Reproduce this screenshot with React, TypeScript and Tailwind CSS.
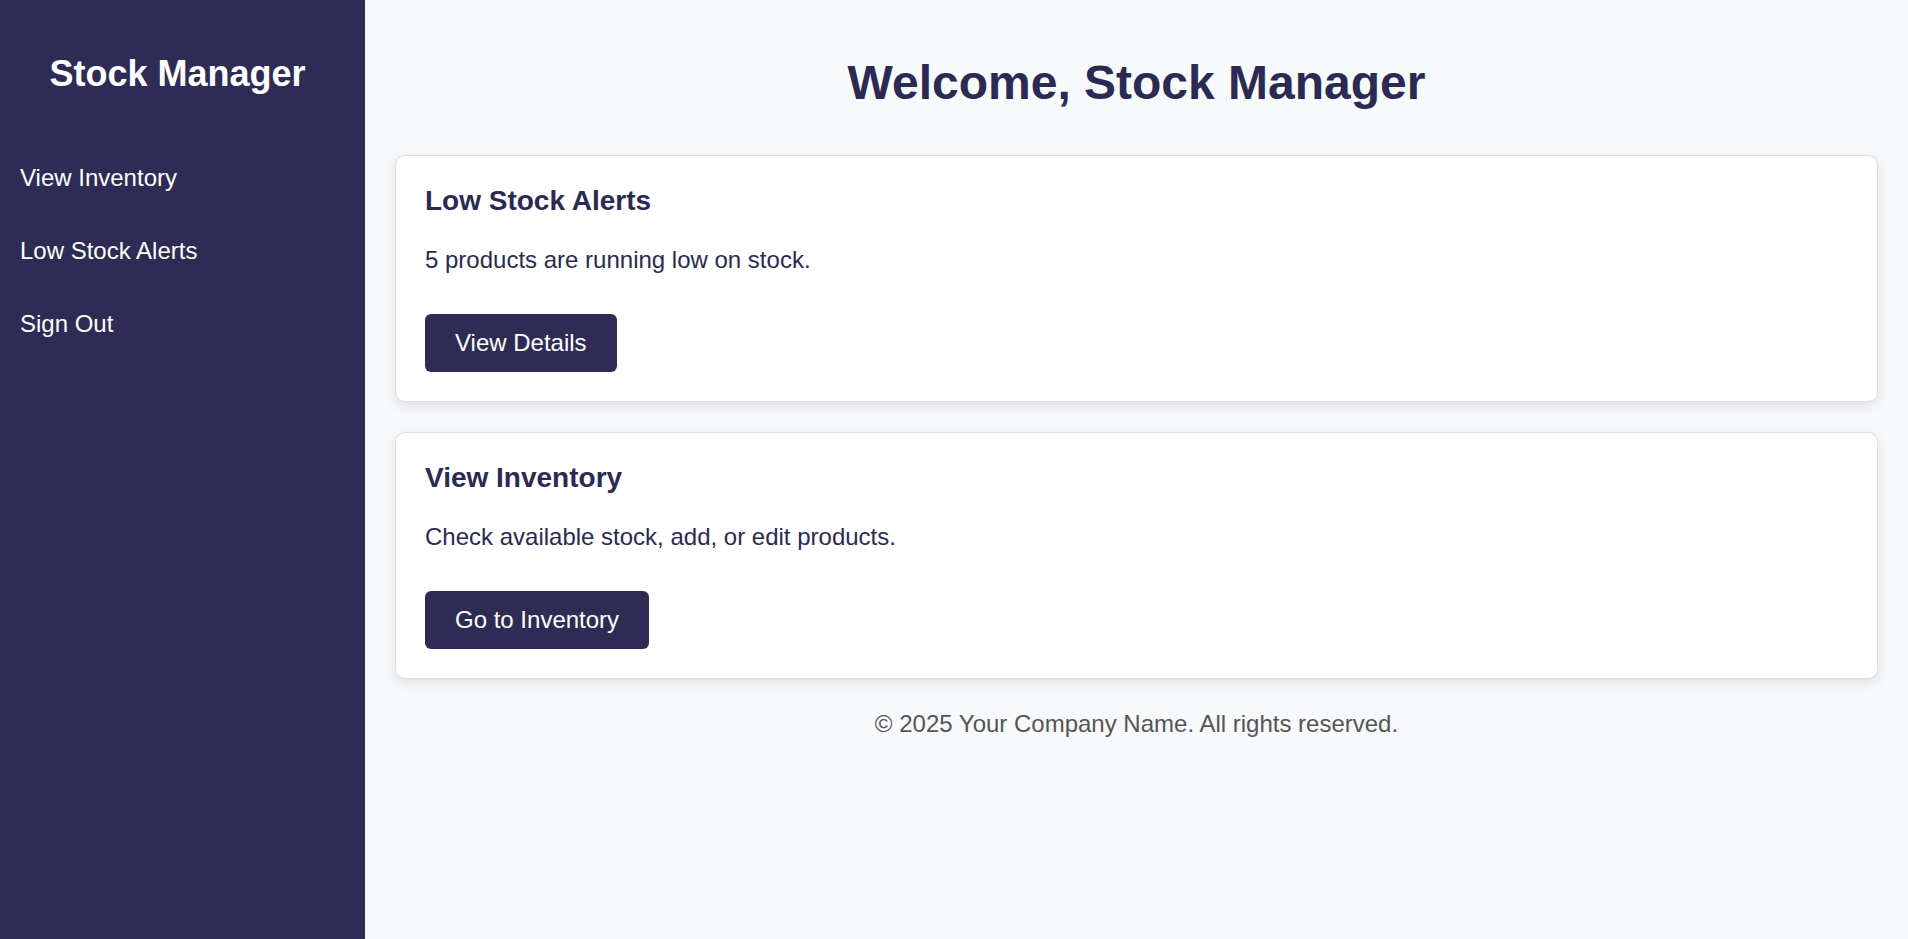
const navLinks = ["View Inventory", "Low Stock Alerts", "Sign Out"];

const cards = [
  {
    title: "Low Stock Alerts",
    text: "5 products are running low on stock.",
    action: "View Details",
  },
  {
    title: "View Inventory",
    text: "Check available stock, add, or edit products.",
    action: "Go to Inventory",
  },
];

function Sidebar() {
  return (
    <aside className="w-[365px] shrink-0 bg-[#2e2c54] pl-[20px] pr-[30px] pt-[53px] text-white">
      <h2 className="text-center text-[36px] font-bold leading-[normal]">
        Stock Manager
      </h2>
      <nav className="mt-[54px] flex flex-col gap-[15px]">
        {navLinks.map((link) => (
          <a key={link} href="#" className="py-[15px] text-[24px] leading-[normal]">
            {link}
          </a>
        ))}
      </nav>
    </aside>
  );
}

function Card({ title, text, action }: { title: string; text: string; action: string }) {
  return (
    <div className="rounded-[10px] border border-[#dedee3] bg-white p-[29px] shadow-[0_4px_12px_rgba(0,0,0,0.11)]">
      <h3 className="text-[28px] font-bold leading-[normal] text-[#2b2a52]">{title}</h3>
      <p className="mt-[29px] text-[24px] leading-[normal] text-[#2b2a52]">{text}</p>
      <button className="mt-[40px] rounded-[6px] bg-[#2e2c54] px-[30px] py-[15px] text-[24px] leading-[normal] text-white">
        {action}
      </button>
    </div>
  );
}

export default function App() {
  return (
    <div className="flex min-h-screen font-['Liberation_Sans',Arial,sans-serif]">
      <Sidebar />
      <main className="flex-1 bg-[#f8f9fb] px-[30px] pt-[55px]">
        <h1 className="text-center text-[48px] font-bold leading-[normal] text-[#2b2a52]">
          Welcome, Stock Manager
        </h1>
        <div className="mt-[45px] flex flex-col gap-[30px]">
          {cards.map((c) => (
            <Card key={c.title} {...c} />
          ))}
        </div>
        <footer className="mt-[31px] text-center text-[24px] leading-[normal] text-[#555]">
          © 2025 Your Company Name. All rights reserved.
        </footer>
      </main>
    </div>
  );
}
